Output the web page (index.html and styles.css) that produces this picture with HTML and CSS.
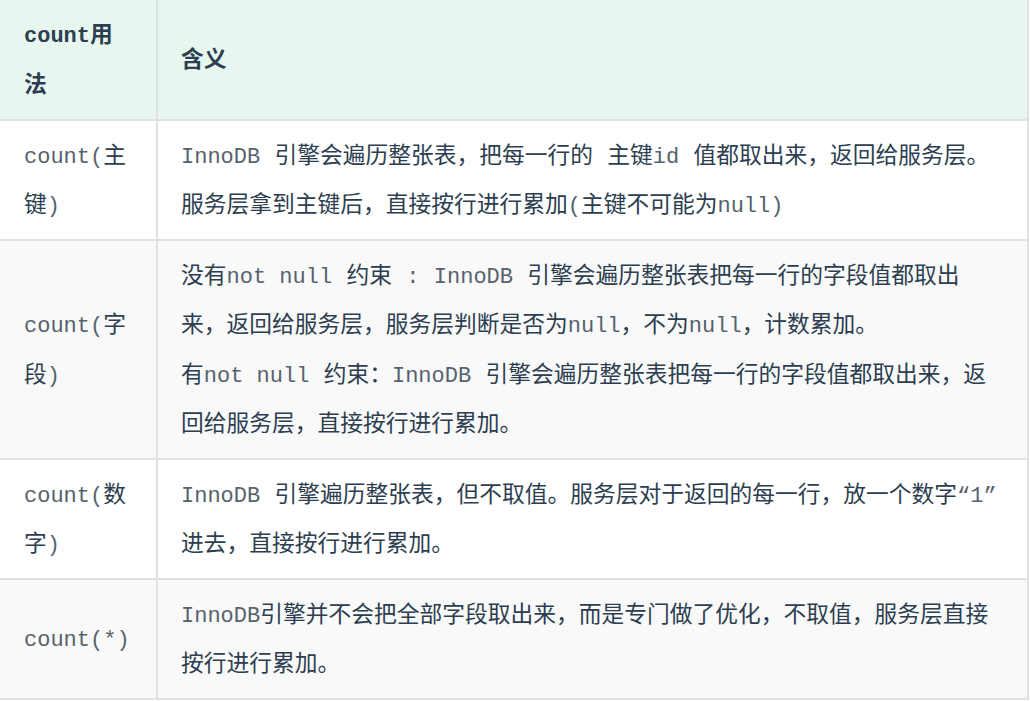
FILE: index.html
```html
<!DOCTYPE html>
<html lang="zh-CN">
<head>
<meta charset="utf-8">
<title>count 用法</title>
<link rel="stylesheet" href="styles.css">
</head>
<body>
<table class="count-table">
  <colgroup>
    <col class="col-usage">
    <col class="col-meaning">
  </colgroup>
  <thead>
    <tr>
      <th class="cell-usage"><code>count</code>用法</th>
      <th class="cell-meaning">含义</th>
    </tr>
  </thead>
  <tbody>
    <tr>
      <td class="cell-usage"><code>count(</code>主键<code>)</code></td>
      <td class="cell-meaning"><code>InnoDB</code> 引擎会遍历整张表，把每一行的 主键<code>id</code> 值都取出来，返回给服务层。服务层拿到主键后，直接按行进行累加<code>(</code>主键不可能为<code>null)</code></td>
    </tr>
    <tr class="striped">
      <td class="cell-usage"><code>count(</code>字段<code>)</code></td>
      <td class="cell-meaning">没有<code>not null</code> 约束 <code>:</code> <code>InnoDB</code> 引擎会遍历整张表把每一行的字段值都取出来，返回给服务层，服务层判断是否为<code>null</code>，不为<code>null</code>，计数累加。<br>有<code>not null</code> 约束：<code>InnoDB</code> 引擎会遍历整张表把每一行的字段值都取出来，返回给服务层，直接按行进行累加。</td>
    </tr>
    <tr>
      <td class="cell-usage"><code>count(</code>数字<code>)</code></td>
      <td class="cell-meaning"><code>InnoDB</code> 引擎遍历整张表，但不取值。服务层对于返回的每一行，放一个数字<code>“1”</code>进去，直接按行进行累加。</td>
    </tr>
    <tr class="striped">
      <td class="cell-usage"><code>count(*)</code></td>
      <td class="cell-meaning"><code>InnoDB</code>引擎并不会把全部字段取出来，而是专门做了优化，不取值，服务层直接按行进行累加。</td>
    </tr>
  </tbody>
</table>
</body>
</html>
```

FILE: styles.css
```css
html, body {
  margin: 0;
  padding: 0;
  background: #ffffff;
}

body {
  font-family: "Liberation Sans", "Noto Sans CJK SC", sans-serif;
  font-size: 22.75px;
  color: #2c3e50;
}

.count-table {
  table-layout: fixed;
  width: 1029px;
  border-collapse: separate;
  border-spacing: 0;
}

.col-usage {
  width: 158px;
}

.col-meaning {
  width: 871px;
}

.count-table th,
.count-table td {
  box-sizing: border-box;
  border-right: 2px solid #dfe2e5;
  border-bottom: 2px solid #dfe2e5;
  line-height: 49.5px;
  text-align: left;
  vertical-align: middle;
  word-spacing: 8px;
}

.count-table th {
  padding-top: 10px;
  padding-bottom: 10px;
  font-weight: bold;
  background: #e7f7ef;
}

.count-table td {
  padding-top: 9.5px;
  padding-bottom: 9.5px;
}

.cell-usage {
  padding-left: 24px;
  padding-right: 24px;
}

.cell-meaning {
  padding-left: 23px;
  padding-right: 26px;
}

.striped td {
  background: #f9f9f9;
}

code {
  font-family: "Liberation Mono", "Noto Sans CJK SC", monospace;
  font-size: 22px;
  line-height: 1;
  color: #56626e;
  word-spacing: 0;
}

th code {
  color: inherit;
  font-weight: bold;
}
```
